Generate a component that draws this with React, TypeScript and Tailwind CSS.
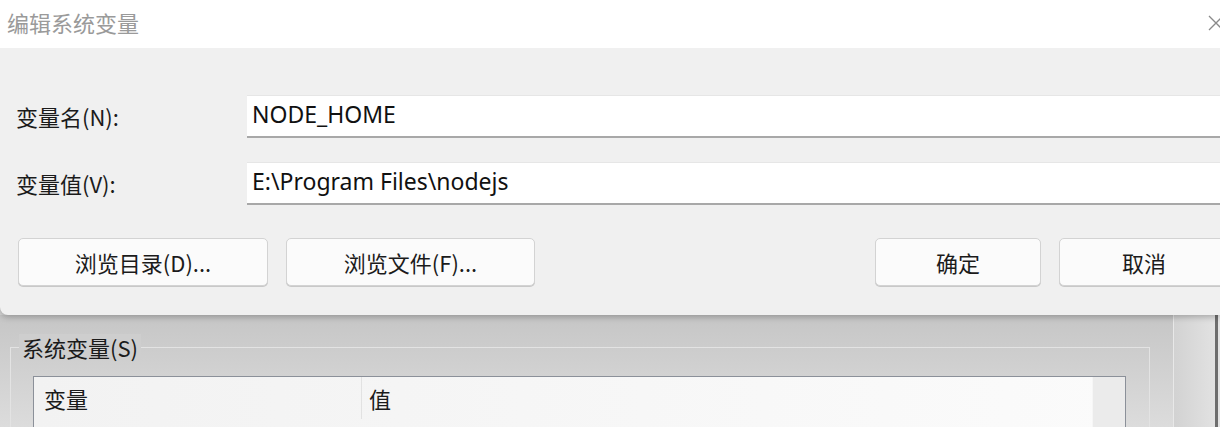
import React from "react";

const cjk = { fontFamily: '"Noto Sans CJK SC", "Noto Sans", sans-serif' };
const latin = { fontFamily: '"Noto Sans", "Noto Sans CJK SC", sans-serif' };

function Btn({ label, w }: { label: string; w: string }) {
  return (
    <button
      className={`${w} h-[48px] rounded-[5px] border border-[#d3d3d3] bg-[#fbfbfb] text-[22px] text-[#1b1b1b] flex items-center justify-center shadow-[0_1px_0_#c8c8c8]`}
      style={cjk}
    >
      {label}
    </button>
  );
}

export default function App() {
  return (
    <div className="w-[1220px] h-[427px] overflow-hidden flex flex-col bg-[#d6d6d6]">
      {/* Dialog */}
      <div className="relative z-10 h-[315px] shrink-0 flex flex-col bg-[#f0f0f0] rounded-bl-[8px] shadow-[0_2px_6px_rgba(0,0,0,0.25)]">
        <div className="h-[48px] bg-white flex items-center justify-between pl-[7px]">
          <span className="text-[22px] text-[#9a9a9a] leading-none mb-[5px]" style={cjk}>
            编辑系统变量
          </span>
          <svg width="16" height="16" viewBox="0 0 16 16" className="mr-[-4px] mb-[3px]">
            <path d="M1 1 L15 15 M15 1 L1 15" stroke="#8a8a8a" strokeWidth="1.3" />
          </svg>
        </div>
        <div className="flex flex-col pt-[47px]">
          <div className="flex items-center h-[43px]">
            <span className="w-[247px] pl-[16px] text-[22px] text-[#1b1b1b]" style={cjk}>
              变量名(N):
            </span>
            <div className="flex-1 h-[43px] bg-white border-t border-[#e6e6e6] border-b-2 border-b-[#a8a8a8] flex items-center pl-[5px] pb-[3px] text-[23px] text-[#111]" style={latin}>
              NODE_HOME
            </div>
          </div>
          <div className="flex items-center h-[43px] mt-[24px]">
            <span className="w-[247px] pl-[16px] text-[22px] text-[#1b1b1b]" style={cjk}>
              变量值(V):
            </span>
            <div className="flex-1 h-[43px] bg-white border-t border-[#e6e6e6] border-b-2 border-b-[#a8a8a8] flex items-center pl-[5px] pb-[3px] text-[23px] text-[#111]" style={latin}>
              E:\Program Files\nodejs
            </div>
          </div>
          <div className="flex items-center mt-[33px] pl-[18px]">
            <Btn label="浏览目录(D)..." w="w-[250px]" />
            <div className="w-[18px]" />
            <Btn label="浏览文件(F)..." w="w-[249px]" />
            <div className="flex-1" />
            <Btn label="确定" w="w-[166px]" />
            <div className="w-[18px]" />
            <Btn label="取消" w="w-[170px] mr-[-9px]" />
          </div>
        </div>
      </div>

      {/* Background window */}
      <div className="flex-1 flex bg-gradient-to-b from-[#c6c6c6] to-[#dcdcdc]">
        <div className="w-[1173px] flex flex-col pl-[10px] pr-[23px] pt-[21px]">
          <div className="relative flex-1 border-t border-l border-r border-[#e3e3e3] mt-[11px] pl-[22px] pr-[23px] pt-[28px]">
            <span className="absolute left-[8px] top-[-14px] px-[3px] text-[22px] leading-[26px] text-[#1b1b1b] bg-[#cecece]" style={cjk}>
              系统变量(S)
            </span>
            <div className="h-full border-t border-l border-r border-[#8b9099] bg-gradient-to-r from-[#f2f2f2] to-[#fbfbfb] flex">
              <div className="w-[328px] h-[42px] flex items-center pl-[10px] border-r border-[#e2e2e2] text-[22px] text-[#1b1b1b]" style={cjk}>
                变量
              </div>
              <div className="flex-1 h-[42px] flex items-center pl-[7px] text-[22px] text-[#1b1b1b]" style={cjk}>
                值
              </div>
              <div className="w-[33px] h-full bg-[#ebebeb] border-l border-[#f6f6f6]" />
            </div>
          </div>
        </div>
        <div className="w-[42px] bg-gradient-to-r from-[#d2d2d2] to-[#e2e2e2] border-l border-[#e8e8e8]" />
        <div className="w-[3px] bg-[#6e6e6e]" />
        <div className="flex-1 bg-[#e4e4e4]" />
      </div>
    </div>
  );
}
